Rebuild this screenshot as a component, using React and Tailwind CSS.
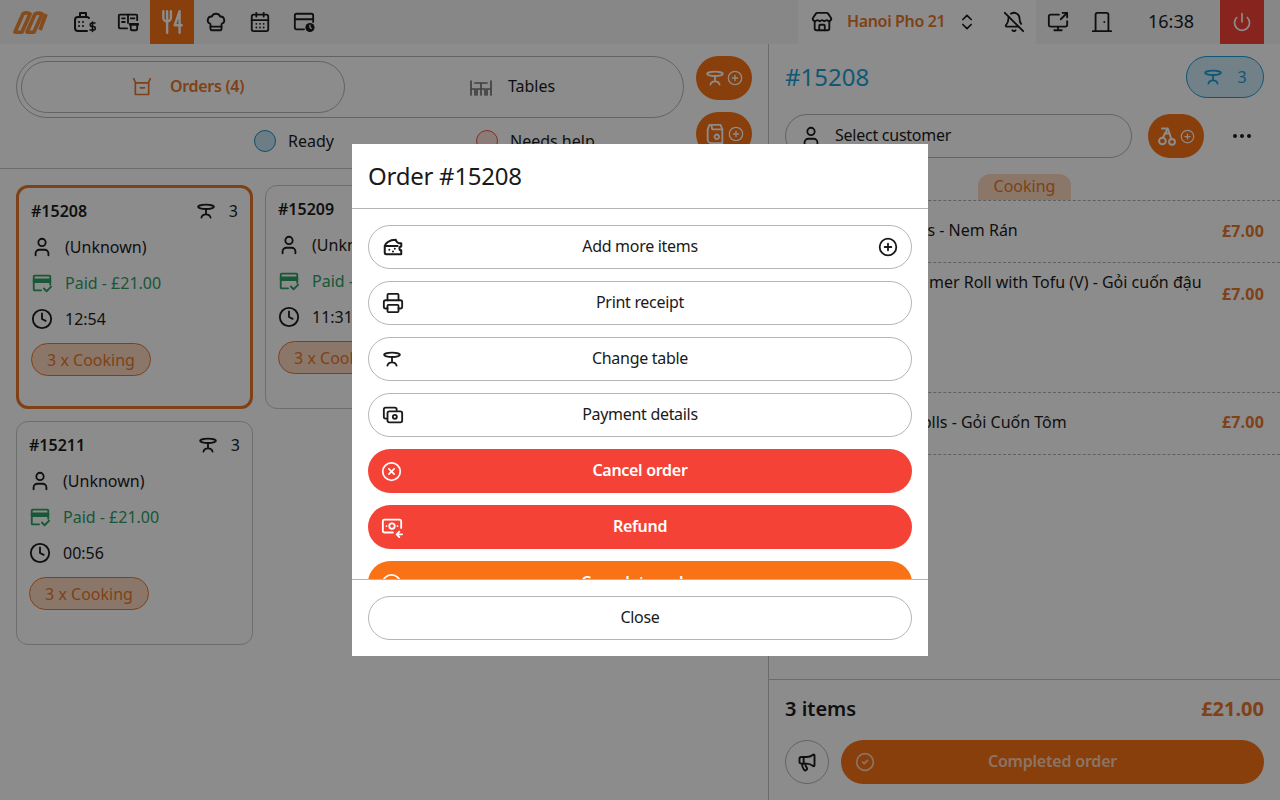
import React from "react";
import {
  BellOff, CalendarDays, ChefHat, ChevronsUpDown, CircleCheck, CirclePlus, CircleX, Clock, Ellipsis,
  Megaphone, Power, Printer, Store, User,
} from "lucide-react";

const ORANGE = "text-[#e8772a]";

function TableIcon({ size = 20, className = "" }) {
  return (
    <svg width={size} height={size} viewBox="0 0 24 24" fill="none" stroke="currentColor" strokeWidth="2.200" strokeLinecap="round" className={className}>
      <ellipse cx="12" cy="7" rx="9.500" ry="2.600" />
      <path d="M12 10v6M6.500 20c.6-2.600 2.800-4 5.500-4s4.900 1.400 5.500 4" />
    </svg>
  );
}

function Logo() {
  return (
    <svg width="38" height="24" viewBox="0 0 38 24" fill="none" stroke="#f08a34" strokeWidth="3.800" strokeLinejoin="round">
      <path d="M3 22 11 4c2-1.500 5-1 7 0L10 22c-2 .5-5 .5-7 0z" />
      <path d="M15 22 23 4c3-1.500 5-1 7 0l-8 18c-2 .5-5 .5-7 0z" />
      <path d="M28 20 34 4" />
    </svg>
  );
}

function PosIcon() {
  return (
    <svg width="24" height="24" viewBox="0 0 24 24" fill="none" stroke="currentColor" strokeWidth="2" strokeLinecap="round" strokeLinejoin="round">
      <path d="M8 7V3h6v4M15 21H6a3 3 0 0 1-3-3V10a3 3 0 0 1 3-3h9a3 3 0 0 1 2 1" />
      <path d="M7 12h.01M11 12h.01M7 16h.01M11 16h.01" />
      <path d="M23 13h-3a1.300 1.300 0 0 0 0 3.500h1.500a1.300 1.300 0 0 1 0 3.500H18M20.500 12v9.500" strokeWidth="1.600" />
    </svg>
  );
}

function MenuIcon() {
  return (
    <svg width="22" height="22" viewBox="0 0 24 24" fill="none" stroke="currentColor" strokeWidth="2" strokeLinecap="round" strokeLinejoin="round">
      <path d="M11 19H3a1 1 0 0 1-1-1V5a1 1 0 0 1 1-1h18a1 1 0 0 1 1 1v5" />
      <path d="M12 4v9M5.500 8h3M5.500 12h3M15 8h4" />
      <path d="M14 14h9v1H14zM15 15v5a1 1 0 0 0 1 1h5a1 1 0 0 0 1-1v-5" />
    </svg>
  );
}

function ForkKnifeIcon() {
  return (
    <svg width="26" height="26" viewBox="0 0 24 24" fill="none" stroke="currentColor" strokeWidth="2.200" strokeLinecap="round" strokeLinejoin="round">
      <path d="M4 2v6a3.500 3.500 0 0 0 7 0V2M7.500 2v20" />
      <path d="M19 2l-4.500 13H21M19 2v20" />
    </svg>
  );
}

function CardClockIcon() {
  return (
    <svg width="22" height="22" viewBox="0 0 24 24" fill="none" stroke="currentColor" strokeWidth="2" strokeLinecap="round" strokeLinejoin="round">
      <path d="M12 20H4a2 2 0 0 1-2-2V5a2 2 0 0 1 2-2h16a2 2 0 0 1 2 2v7M2 9h20" />
      <circle cx="18.500" cy="18" r="5" fill="currentColor" stroke="none" />
      <path d="M18.500 15.500V18l1.500 1" stroke="#fff" strokeWidth="1.300" />
    </svg>
  );
}

function MonitorShareIcon() {
  return (
    <svg width="22" height="22" viewBox="0 0 24 24" fill="none" stroke="currentColor" strokeWidth="2" strokeLinecap="round" strokeLinejoin="round">
      <path d="M13 4H4a2 2 0 0 0-2 2v9a2 2 0 0 0 2 2h16a2 2 0 0 0 2-2v-4M8 21h8M12 17v4M15 9l7-7M17 2h5v5" />
    </svg>
  );
}

function DoorIcon() {
  return (
    <svg width="22" height="22" viewBox="0 0 24 24" fill="none" stroke="currentColor" strokeWidth="2" strokeLinecap="round" strokeLinejoin="round">
      <path d="M2 22h20M5 22V4a2 2 0 0 1 2-2h10a2 2 0 0 1 2 2v18M14.500 12h.01" />
    </svg>
  );
}

function OrderTabIcon() {
  return (
    <svg width="20" height="20" viewBox="0 0 24 24" fill="none" stroke="currentColor" strokeWidth="2" strokeLinecap="round" strokeLinejoin="round">
      <path d="M2 2l2 4v15h16V6l2-4M4 7h16M10 13h5" />
    </svg>
  );
}

function TablesIcon() {
  return (
    <svg width="24" height="20" viewBox="0 0 24 20" fill="none" stroke="currentColor" strokeWidth="1.700" strokeLinecap="round">
      <path d="M6 6h12M12 6v12M8 18v-6h8v6M2 4v14M2 12h4v6M22 4v14M22 12h-4v6" />
    </svg>
  );
}

function PaidIcon() {
  return (
    <svg width="22" height="22" viewBox="0 0 24 24" fill="none" stroke="currentColor" strokeWidth="2" strokeLinecap="round" strokeLinejoin="round">
      <path d="M11 20H4a1 1 0 0 1-1-1V5a1 1 0 0 1 1-1h16a1 1 0 0 1 1 1v9" />
      <path d="M3 8h18v3H3z" fill="currentColor" />
      <path d="M14 18l3 3 5-5" />
    </svg>
  );
}

function BagIcon() {
  return (
    <svg width="22" height="24" viewBox="0 0 24 24" fill="none" stroke="currentColor" strokeWidth="2" strokeLinecap="round" strokeLinejoin="round">
      <path d="M6 2h12l2 5v15H8a4 4 0 0 1-4-4V7z" />
      <path d="M8 2l1 5h11M14 12.500a2.500 2.500 0 1 0 .01 0" />
    </svg>
  );
}

function BikeIcon() {
  return (
    <svg width="20" height="20" viewBox="0 0 24 24" fill="none" stroke="currentColor" strokeWidth="2.400" strokeLinecap="round" strokeLinejoin="round">
      <circle cx="6.500" cy="18" r="4" />
      <circle cx="18" cy="19" r="3.500" />
      <path d="M6 3h7L7 14M13 3l4 12M9 9h6" />
    </svg>
  );
}

function CheeseIcon() {
  return (
    <svg width="22" height="22" viewBox="0 0 24 24" fill="none" stroke="currentColor" strokeWidth="2.200" strokeLinecap="round" strokeLinejoin="round">
      <path d="M3 12c0-4 5-8 12-8 .6 2.500 2.800 4 6 4v3.500a2 2 0 0 0 0 4V20H5a2 2 0 0 1-2-2z" />
      <path d="M3 11h14M8 15h.01M12 17h.01M14 14h.01" />
    </svg>
  );
}

function CashIcon() {
  return (
    <svg width="22" height="22" viewBox="0 0 24 24" fill="none" stroke="currentColor" strokeWidth="2" strokeLinecap="round" strokeLinejoin="round">
      <path d="M5 16H4a2 2 0 0 1-2-2V6a2 2 0 0 1 2-2h10a2 2 0 0 1 2 2v1" />
      <rect x="6" y="8" width="16" height="12" rx="2" />
      <circle cx="14" cy="14" r="2.200" />
    </svg>
  );
}

function RefundIcon() {
  return (
    <svg width="22" height="22" viewBox="0 0 24 24" fill="none" stroke="currentColor" strokeWidth="2" strokeLinecap="round" strokeLinejoin="round">
      <path d="M13 18H4a2 2 0 0 1-2-2V6a2 2 0 0 1 2-2h16a2 2 0 0 1 2 2v7" />
      <circle cx="12" cy="11" r="3" />
      <path d="M6 11h.01M18 11h.01M20 23l-3-3 3-3M17 20h6" />
    </svg>
  );
}

function OrderCard({ id, time, selected }) {
  return (
    <div className={`h-[224px] rounded-xl px-3 pt-[11px] ${selected ? "border-[3px] border-[#e8772a]" : "border border-[#c8c8c8]"}`}>
      <div className="flex h-6 items-center justify-between">
        <span className="font-semibold">#{id}</span>
        <span className="flex items-center gap-[13px]">
          <TableIcon />
          <span>3</span>
        </span>
      </div>
      <div className="mt-3 flex h-6 items-center gap-[12px]">
        <User size={22} className="shrink-0" />
        <span>(Unknown)</span>
      </div>
      <div className="mt-3 flex h-6 items-center gap-[12px] text-[#2e9e65]">
        <PaidIcon />
        <span>Paid - £21.00</span>
      </div>
      <div className="mt-3 flex h-6 items-center gap-[12px]">
        <Clock size={22} className="shrink-0" />
        <span>{time}</span>
      </div>
      <div className={`mt-3 flex h-[33px] w-[120px] items-center justify-center rounded-full border border-[#e8772a] bg-[#fbd9c2] ${ORANGE}`}>
        3 x Cooking
      </div>
    </div>
  );
}

function ItemRow({ name, rowClass, textClass, priceClass }) {
  return (
    <div className={`relative border-b border-dashed border-[#b0b0b0] pr-[72px] ${rowClass}`}>
      <div className={`leading-6 ${textClass}`}>{name}</div>
      <span className={`absolute right-4 font-bold tracking-[0.2px] ${ORANGE} ${priceClass}`}>£7.00</span>
    </div>
  );
}

function ModalButton({ icon, label, right, className }) {
  return (
    <button className={`relative flex h-11 w-full shrink-0 items-center justify-center rounded-full ${className}`}>
      <span className="absolute left-[13px] flex">{icon}</span>
      <span className="pb-[2px] tracking-[-0.3px]">{label}</span>
      {right && <span className="absolute right-[13px] flex">{right}</span>}
    </button>
  );
}

export default function App() {
  const outline = "border border-[#b5b5b5] bg-white text-[#1a1a1a]";
  const red = "bg-[#f44336] font-semibold text-white";

  return (
    <div className="h-[800px] w-[1280px] overflow-hidden bg-white font-['Noto_Sans',sans-serif] text-[#1c1c1c]">
      {/* Top bar */}
      <div className="flex h-11 items-center bg-[#f6f6f6]">
        <div className="flex w-[62px] justify-center"><Logo /></div>
        <div className="flex h-11 w-11 items-center justify-center"><PosIcon /></div>
        <div className="flex h-11 w-11 items-center justify-center"><MenuIcon /></div>
        <div className="flex h-11 w-11 items-center justify-center bg-[#f97316] text-white"><ForkKnifeIcon /></div>
        <div className="flex h-11 w-11 items-center justify-center"><ChefHat size={22} /></div>
        <div className="flex h-11 w-11 items-center justify-center"><CalendarDays size={22} /></div>
        <div className="flex h-11 w-11 items-center justify-center"><CardClockIcon /></div>
        <div className="ml-[472px] flex h-11 w-[238px] items-center bg-white">
          <span className="ml-[13px] flex"><Store size={22} /></span>
          <span className={`ml-[14px] pb-[2px] font-semibold tracking-[-0.35px] ${ORANGE}`}>Hanoi Pho 21</span>
          <span className="ml-[12px] flex"><ChevronsUpDown size={20} /></span>
          <span className="ml-[26px] flex"><BellOff size={22} /></span>
        </div>
        <div className="flex h-11 w-11 items-center justify-center"><MonitorShareIcon /></div>
        <div className="flex h-11 w-11 items-center justify-center"><DoorIcon /></div>
        <span className="ml-[24px] w-[48px] pb-[2px] text-[18px]">16:38</span>
        <div className="ml-[24px] flex h-11 w-11 items-center justify-center bg-[#f44336] text-white"><Power size={20} /></div>
      </div>

      <div className="flex h-[756px]">
        {/* Left panel */}
        <div className="w-[769px] border-r border-[#c4c4c4]">
          <div className="flex h-[125px] gap-3 border-b border-[#c4c4c4] pl-4 pt-3">
            <div className="w-[668px]">
              <div className="flex h-[62px] rounded-full border border-[#b5b5b5] p-1">
                <div className={`flex w-[324px] items-center justify-center gap-[18px] rounded-full border border-[#b5b5b5] bg-white pl-[10px] font-semibold ${ORANGE}`}>
                  <OrderTabIcon />
                  <span className="pb-[2px] tracking-[-0.3px]">Orders (4)</span>
                </div>
                <div className="flex flex-1 items-center justify-center gap-[15px]">
                  <span className="text-[#777]"><TablesIcon /></span>
                  <span className="pb-[2px]">Tables</span>
                </div>
              </div>
              <div className="mt-3 flex h-[22px] items-center pl-[238px]">
                <span className="h-[22px] w-[22px] rounded-full border border-[#1f8fc0] bg-[#c5e3f3]" />
                <span className="ml-3 w-[188px]">Ready</span>
                <span className="h-[22px] w-[22px] rounded-full border border-[#e8574a] bg-[#fde1dc]" />
                <span className="ml-3">Needs help</span>
              </div>
            </div>
            <div className="flex flex-col gap-3">
              <div className="flex h-11 w-14 items-center justify-center gap-[2px] rounded-full bg-[#f97316] text-white"><TableIcon /><CirclePlus size={16} /></div>
              <div className="flex h-11 w-14 items-center justify-center gap-[2px] rounded-full bg-[#f97316] text-white"><BagIcon /><CirclePlus size={16} /></div>
            </div>
          </div>
          <div className="grid w-[757px] grid-cols-[237px_237px_237px] gap-3 pl-4 pt-4">
            <OrderCard id="15208" time="12:54" selected />
            <OrderCard id="15209" time="11:31" />
            <div className="h-[224px] rounded-xl border border-[#c8c8c8]" />
            <OrderCard id="15211" time="00:56" />
          </div>
        </div>

        {/* Right panel */}
        <div className="flex flex-1 flex-col">
          <div className="flex h-[70px] items-center justify-between px-4 pb-[16px] pt-3">
            <span className="text-2xl text-[#1f9fd6]">#15208</span>
            <span className="flex h-[42px] w-[78px] items-center justify-center gap-[14px] rounded-full border border-[#1f9fd6] bg-[#cfe9f6] text-[#1f9fd6]">
              <TableIcon />3
            </span>
          </div>
          <div className="flex h-11 items-center px-4">
            <div className="flex h-11 w-[347px] items-center gap-[13px] rounded-full border border-[#b5b5b5] pl-[14px]">
              <User size={22} />
              <span className="pb-[2px] tracking-[-0.25px]">Select customer</span>
            </div>
            <div className="ml-4 flex h-11 w-14 items-center justify-center gap-[3px] rounded-full bg-[#f97316] text-white"><BikeIcon /><CirclePlus size={15} /></div>
            <span className="ml-[26px] flex"><Ellipsis size={24} /></span>
          </div>
          <div className="mt-4 flex h-[26px] justify-center">
            <span className={`flex w-[93px] items-center justify-center rounded-t-xl bg-[#fbd9c2] pb-[2px] ${ORANGE}`}>Cooking</span>
          </div>
          <div className="flex-1 border-t border-dashed border-[#b0b0b0]">
            <ItemRow name="Crispy Spring Rolls - Nem Rán" rowClass="h-[62px]" textClass="pl-[27px] pt-[17px]" priceClass="top-[18px]" />
            <ItemRow name="Fresh Summer Roll with Tofu (V) - Gỏi cuốn đậu hũ" rowClass="h-[130px]" textClass="pl-[81px] pt-[7px]" priceClass="top-[19px]" />
            <ItemRow name="Prawn Summer Rolls - Gỏi Cuốn Tôm" rowClass="h-[62px]" textClass="pl-[23px] pt-[17px]" priceClass="top-[17px]" />
          </div>
          <div className="h-[121px] border-t border-[#c4c4c4] px-4">
            <div className="mt-[15px] flex items-center justify-between text-xl">
              <span className="font-semibold">3 items</span>
              <span className={`font-bold ${ORANGE}`}>£21.00</span>
            </div>
            <div className="mt-[17px] flex gap-3">
              <div className="flex h-11 w-11 items-center justify-center rounded-full border border-[#b5b5b5]"><Megaphone size={20} strokeWidth={2.3} /></div>
              <div className="relative flex h-11 flex-1 items-center justify-center rounded-full bg-[#f97316] pb-[2px] font-semibold tracking-[-0.2px] text-white/70">
                <CircleCheck size={20} className="absolute left-[14px] top-3" />
                Completed order
              </div>
            </div>
          </div>
        </div>
      </div>

      {/* Dialog */}
      <div className="fixed inset-0 flex items-center justify-center bg-black/45">
        <div className="flex h-[512px] w-[576px] flex-col bg-white">
          <div className="flex h-[65px] shrink-0 items-center border-b border-[#b5b5b5] px-4 text-2xl tracking-[-0.25px] text-[#1a1a1a]">Order #15208</div>
          <div className="flex flex-1 flex-col gap-3 overflow-hidden px-4 pt-4">
            <ModalButton className={outline} icon={<CheeseIcon />} label="Add more items" right={<CirclePlus size={20} strokeWidth={2.2} />} />
            <ModalButton className={outline} icon={<Printer size={22} />} label="Print receipt" />
            <ModalButton className={outline} icon={<TableIcon />} label="Change table" />
            <ModalButton className={outline} icon={<CashIcon />} label="Payment details" />
            <ModalButton className={red} icon={<CircleX size={21} />} label="Cancel order" />
            <ModalButton className={red} icon={<RefundIcon />} label="Refund" />
            <ModalButton className="bg-[#f97316] font-semibold text-white" icon={<CircleCheck size={21} />} label="Complete order" />
          </div>
          <div className="h-[77px] shrink-0 border-t border-[#b5b5b5] px-4 pt-4">
            <button className={`h-11 w-full rounded-full pb-[2px] tracking-[-0.3px] ${outline}`}>Close</button>
          </div>
        </div>
      </div>
    </div>
  );
}
